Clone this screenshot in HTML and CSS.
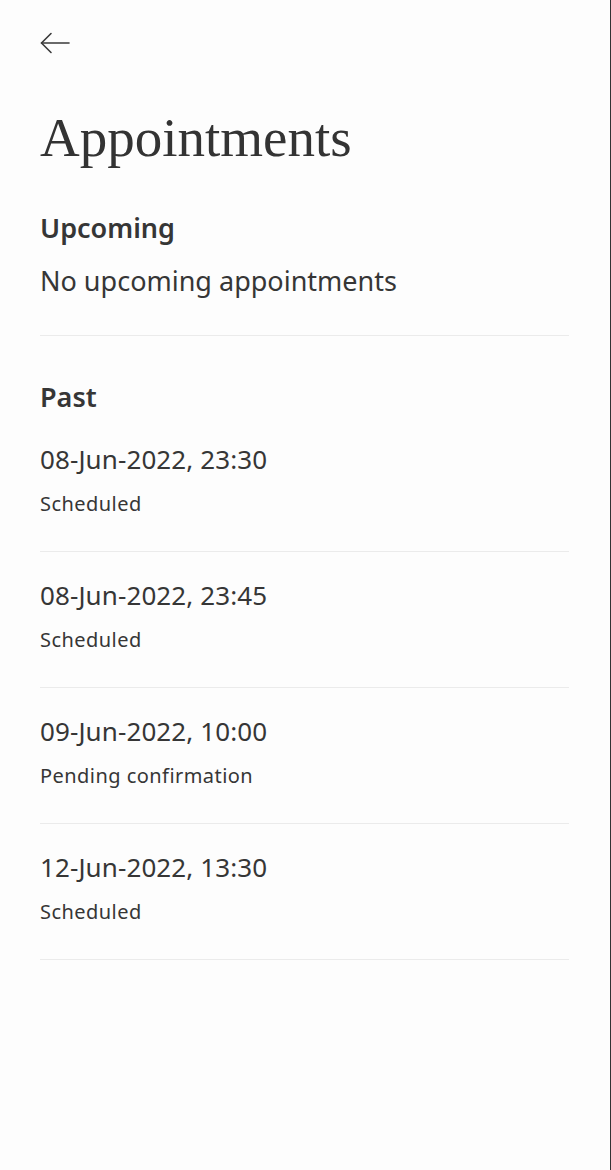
FILE: index.html
```html
<!DOCTYPE html>
<html lang="en">
<head>
<meta charset="utf-8">
<title>Appointments</title>
<link rel="stylesheet" href="styles.css">
</head>
<body>
<div class="page">
  <header class="top">
    <button class="back" aria-label="Back">
      <svg width="30" height="22" viewBox="0 0 30 22" fill="none" stroke="#3a3a3a" stroke-width="1.6" stroke-linecap="round" stroke-linejoin="round">
        <path d="M29 11H1.5"/>
        <path d="M11 1.5L1.5 11L11 20.5"/>
      </svg>
    </button>
  </header>
  <h1 class="title">Appointments</h1>

  <section class="section upcoming">
    <h2 class="section-title">Upcoming</h2>
    <p class="empty">No upcoming appointments</p>
  </section>

  <section class="section past">
    <h2 class="section-title">Past</h2>
    <ul class="list">
      <li class="item"><div class="date">08-Jun-2022, 23:30</div><div class="status">Scheduled</div></li>
      <li class="item"><div class="date">08-Jun-2022, 23:45</div><div class="status">Scheduled</div></li>
      <li class="item"><div class="date">09-Jun-2022, 10:00</div><div class="status">Pending confirmation</div></li>
      <li class="item"><div class="date">12-Jun-2022, 13:30</div><div class="status">Scheduled</div></li>
    </ul>
  </section>
</div>
</body>
</html>
```
FILE: styles.css
```css
html, body {
  margin: 0;
  padding: 0;
  background: #fdfdfd;
}
body {
  font-family: "Noto Sans", "Open Sans", sans-serif;
  color: #363636;
}
.page {
  min-height: 1170px;
  box-sizing: border-box;
  padding: 0 41px 0 40px;
  border-right: 1px solid #333333;
}
.top {
  padding-top: 32px;
  height: 24px;
}
.back {
  display: block;
  padding: 0;
  margin: 0;
  border: 0;
  background: none;
  width: 30px;
  height: 22px;
}
.back svg { display: block; }
.title {
  margin: 52px 0 0 0;
  font-family: "Liberation Serif", "Times New Roman", serif;
  font-weight: 400;
  font-size: 55px;
  line-height: 60px;
  color: #333333;
}
.section-title {
  margin: 0;
  font-size: 27px;
  font-weight: 600;
  line-height: 34px;
}
.upcoming {
  padding-top: 43px;
  padding-bottom: 36px;
  border-bottom: 1px solid #ebebeb;
}
.empty {
  margin: 18px 0 0 0;
  font-size: 27px;
  line-height: 36px;
}
.past {
  padding-top: 44px;
}
.past .section-title {
  margin-bottom: 2px;
}
.list {
  list-style: none;
  margin: 0;
  padding: 0;
}
.item {
  border-bottom: 1px solid #ebebeb;
  padding: 25px 0 33px;
}
.date {
  font-size: 26px;
  line-height: 36px;
  letter-spacing: 0.1px;
}
.status {
  margin-top: 13px;
  font-size: 20px;
  line-height: 28px;
  letter-spacing: 0.45px;
}
```
